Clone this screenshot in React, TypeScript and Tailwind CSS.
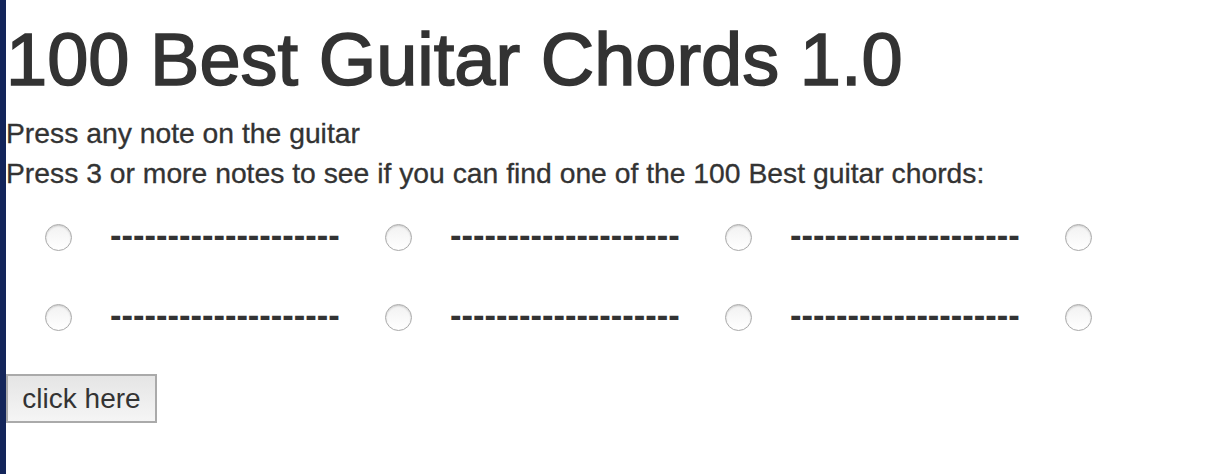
import React from 'react';

// one chord slot: radio + placeholder chord name
const Slot: React.FC<{ last?: boolean }> = ({ last }) => (
    <div className={last ? 'flex items-center' : 'flex items-center w-[340px] shrink-0'}>
        <span className="ml-[39px] w-[27px] h-[27px] rounded-full border border-[#aaa] bg-gradient-to-b from-[#f2f2f2] to-white shadow-[inset_0_1px_2px_rgba(0,0,0,0.18)] shrink-0" />
        {!last && (
            <span className="ml-[38px] -mt-[3px] text-[34.5px] leading-none font-bold text-[#333]">--------------------</span>
        )}
    </div>
);

const Row: React.FC = () => (
    <div className="flex items-center h-[80px]">
        <Slot />
        <Slot />
        <Slot />
        <Slot last />
    </div>
);

export default function App() {
    return (
        <div className="flex min-h-[474px] bg-white font-['Liberation_Sans',Arial,sans-serif] text-[#333]">
            <div className="w-[6px] shrink-0 bg-[#13255a]" />
            <div className="flex-1">
                <h1 className="mt-[20px] mb-[14px] text-[74px] leading-[79px] font-normal [-webkit-text-stroke:1.6px_#333]">100 Best Guitar Chords 1.0</h1>
                <p className="text-[28.3px] leading-[40px] [-webkit-text-stroke:0.3px_#333]">Press any note on the guitar</p>
                <p className="text-[28.3px] leading-[40px] [-webkit-text-stroke:0.3px_#333]">Press 3 or more notes to see if you can find one of the 100 Best guitar chords:</p>
                <div className="mt-[4px]">
                    <Row />
                    <Row />
                </div>
                <button className="mt-[17px] w-[151px] h-[49px] border-2 border-[#aaa] bg-gradient-to-b from-[#e5e5e5] to-[#f5f5f5] text-[28px] text-[#333] leading-none">
                    click here
                </button>
            </div>
        </div>
    );
}
